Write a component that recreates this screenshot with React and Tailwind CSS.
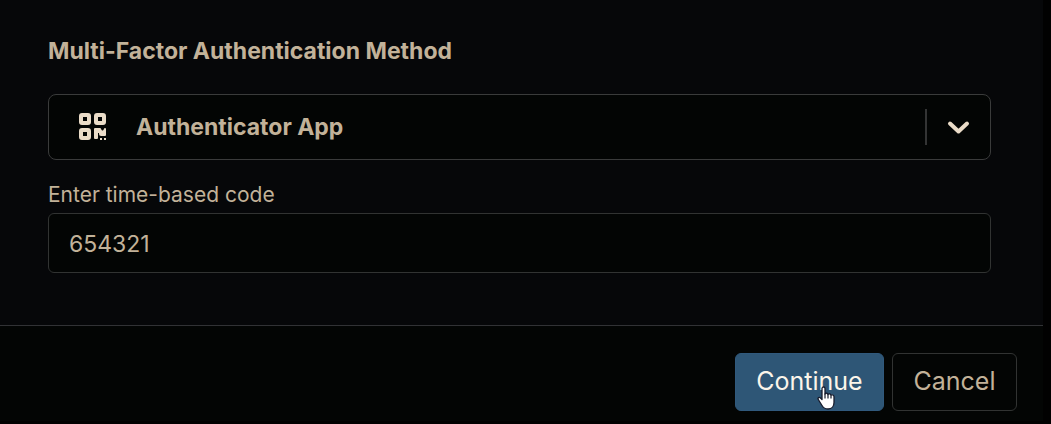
import React from "react";

function QrIcon() {
  return (
    <svg viewBox="0 0 27 28" className="h-7 w-[27px]" fill="#eadcc8" fillRule="evenodd" aria-hidden="true">
      <path d="M3 0h6a3 3 0 0 1 3 3v6a3 3 0 0 1-3 3H3a3 3 0 0 1-3-3V3a3 3 0 0 1 3-3Zm1 4v4h4V4Z" />
      <path d="M18 0h6a3 3 0 0 1 3 3v6a3 3 0 0 1-3 3h-6a3 3 0 0 1-3-3V3a3 3 0 0 1 3-3Zm1 4v4h4V4Z" />
      <path d="M3 15h6a3 3 0 0 1 3 3v6a3 3 0 0 1-3 3H3a3 3 0 0 1-3-3v-6a3 3 0 0 1 3-3Zm1 4v4h4v-4Z" />
      <path d="M16 15h5a1 1 0 0 1 1 1l1 1.500h1l1-1.500a1 1 0 0 1 2 0v6a1 1 0 0 1-1 1h-4a2 2 0 0 1-2-2v-1h-1v5a1 1 0 0 1-1 1h-2a1 1 0 0 1-1-1V16a1 1 0 0 1 1-1Z" />
      <path d="M21 25h2v2h-2ZM25 25h2v2h-2Z" />
    </svg>
  );
}

function Pointer() {
  return (
    <svg viewBox="0 0 18 24" className="pointer-events-none absolute top-8 left-[81px] h-6 w-[18px]" aria-hidden="true">
      <path
        d="M5 2.500C5 .5 8 .5 8 2.500V8c.5-1.200 2.700-1 3 .5.7-1 2.600-.7 3 .7 1-.8 3-.2 3 1.500v5.800c0 3.800-2.300 6.500-6 6.500-3 0-4.700-1.300-6-3.500l-3.700-6c-1-1.700 1-2.700 2.200-1.500L5 13.500Z"
        fill="#fff"
        stroke="#171b2c"
        strokeWidth="1.300"
        strokeLinejoin="round"
      />
      <path d="M8 7.500v5M11 8.500v4M14 9.200v3.300" stroke="#171b2c" strokeWidth="1.200" />
    </svg>
  );
}

export default function App() {
  return (
    <div className="min-h-screen bg-[#010101] pr-2 font-['Inter',sans-serif] text-[#c2b299]">
      <form onSubmit={(e) => e.preventDefault()}>
        <div className="bg-[#060709] pt-9 pr-[52px] pb-[52px] pl-12">
          <label htmlFor="method" className="block text-[23px] leading-[30px] font-bold">
            Multi-Factor Authentication Method
          </label>
          <div className="mt-7 grid items-center">
            <select
              id="method"
              className="col-start-1 row-start-1 h-[66px] w-full appearance-none rounded-lg border border-[#3a3b3b] bg-[#030504] pl-[87px] text-[23px] font-bold outline-none"
            >
              <option>Authenticator App</option>
            </select>
            <div className="pointer-events-none col-start-1 row-start-1 flex items-center justify-between pr-5 pl-[31px]">
              <QrIcon />
              <div className="flex items-center gap-5">
                <span className="h-9 w-0.5 bg-[#333434]" />
                <svg viewBox="0 0 24 24" className="size-6" fill="none" stroke="#eadcc8" strokeWidth="4" strokeLinecap="round" strokeLinejoin="round" aria-hidden="true">
                  <path d="M3 8.500 11.500 16.500 20 8.500" />
                </svg>
              </div>
            </div>
          </div>
          <label htmlFor="code" className="mt-5 block text-[21px] leading-[30px]">
            Enter time-based code
          </label>
          <input
            id="code"
            type="text"
            inputMode="numeric"
            defaultValue="654321"
            className="mt-[3px] block h-[60px] w-full rounded-md border border-[#313332] bg-[#030504] px-5 pt-0.5 text-[23px] outline-none"
          />
        </div>
        <div className="flex justify-end gap-2 border-t border-[#313235] bg-[#030504] pt-[27px] pr-[26px] pb-[10px] text-[25px]">
          <button type="submit" className="relative h-[58px] min-w-[149px] rounded-md border border-[#30597c] bg-[#2e5676] px-5 text-[#fbf5ea]">
            Continue
            <Pointer />
          </button>
          <button type="button" className="h-[58px] min-w-[125px] rounded-md border border-[#313332] px-5">
            Cancel
          </button>
        </div>
      </form>
    </div>
  );
}
